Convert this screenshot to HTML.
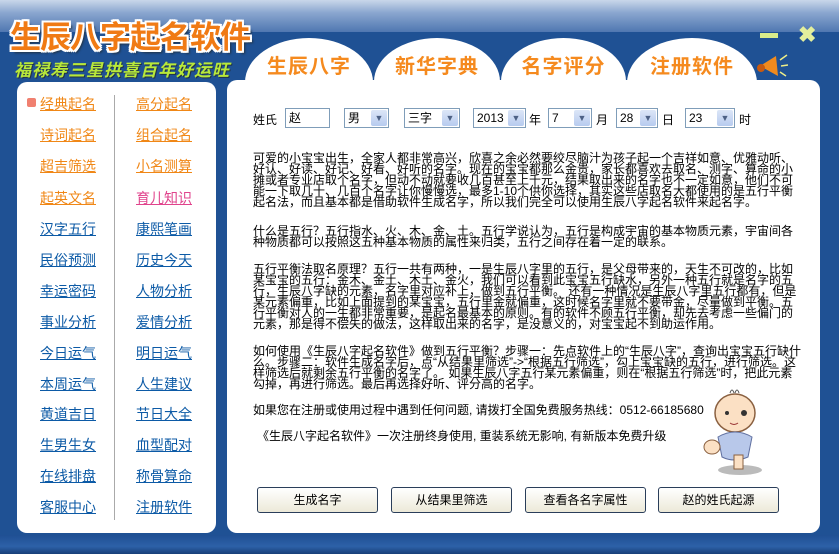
<!DOCTYPE html>
<html><head><meta charset="utf-8"><style>
*{margin:0;padding:0;box-sizing:border-box}
body{width:839px;height:554px;overflow:hidden;font-family:"Liberation Sans","WenQuanYi Zen Hei","Noto Sans CJK SC",sans-serif;font-size:12px;color:#000;position:relative;background:#1f5194}
.top{position:absolute;left:0;top:0;width:839px;height:32px;background:linear-gradient(180deg,#c9d7ea 0%,#8aa6cf 40%,#4f77b1 100%)}
.bot{position:absolute;left:0;top:535px;width:839px;height:19px;background:linear-gradient(180deg,#1f4f93,#2d61a8 60%,#173f78)}
.title{position:absolute;left:10px;top:12px;font-size:31px;font-weight:bold;color:#f07a14;letter-spacing:-1px;text-shadow:-2px 0 #fff,2px 0 #fff,0 -2px #fff,0 2px #fff,2px 2px #fff,-2px -2px #fff,2px -2px #fff,-2px 2px #fff,3px 3px 2px #234}
.sub{position:absolute;left:14px;top:56px;font-size:17px;font-weight:bold;color:#b8e83a;font-style:italic;letter-spacing:1px;text-shadow:1px 1px 0 #234}
.tab{position:absolute;top:38px;height:60px;background:#fff;border-radius:65px 65px 0 0 / 45px 45px 0 0;color:#f58a1e;font-size:20px;font-weight:bold;text-align:center;padding-top:12px;letter-spacing:1px}
.left{position:absolute;left:17px;top:82px;width:199px;height:451px;background:#fff;border-radius:10px}
.div{position:absolute;left:114px;top:95px;width:1px;height:425px;background:#aaa}
.m{position:absolute;font-size:14px;text-decoration:underline;color:#0c5aa6;white-space:nowrap}
.o{color:#f08716}.p{color:#e0438c}
.main{position:absolute;left:227px;top:80px;width:593px;height:453px;background:#fff;border-radius:10px}
.inp{position:absolute;top:108px;height:20px;border:1px solid #7f9db9;background:#fff;font-size:12px;padding:2px 3px;line-height:14px}
.sel .ar{position:absolute;right:1px;top:1px;width:16px;height:16px;background:linear-gradient(#dce6f7,#b7cbef);border-radius:2px;color:#4d6185;font-size:9px;text-align:center;line-height:16px}
.lbl{position:absolute;top:111px;font-size:12px}
.txt{position:absolute;left:253px;width:550px;font-size:12px;line-height:11px}
.btn{position:absolute;top:487px;width:121px;height:26px;border:1px solid #2a3e5a;border-radius:3px;background:linear-gradient(#fff,#ece9d8);text-align:center;line-height:24px;font-size:12px}
</style></head><body>
<div class="top"></div>
<div class="bot"></div>
<div class="title">生辰八字起名软件</div>
<div class="sub">福禄寿三星拱喜百年好运旺</div>
<div class="tab" style="left:245px;width:128px">生辰八字</div>
<div class="tab" style="left:374px;width:126px">新华字典</div>
<div class="tab" style="left:501px;width:125px">名字评分</div>
<div class="tab" style="left:627px;width:130px">注册软件</div>
<div style="position:absolute;left:760px;top:33px;width:18px;height:5px;background:#d9ec8a"></div>
<div style="position:absolute;left:798px;top:22px;font-size:22px;font-weight:bold;color:#e3ef9c">✖</div>
<svg style="position:absolute;left:756px;top:52px" width="32" height="28"><polygon points="4,14 20,4 22,24" fill="#f08a1e"/><circle cx="5" cy="16" r="4" fill="#c85a10"/><path d="M24 8 L31 3 M25 14 L32 13 M24 20 L30 24" stroke="#ee8" stroke-width="1.5"/></svg>
<div class="left"></div>
<div class="div"></div>
<div style="position:absolute;left:27px;top:98px;width:9px;height:9px;background:#f08070;border-radius:2px"></div>
<div class="m o" style="left:40px;top:94px">经典起名</div><div class="m o" style="left:136px;top:94px">高分起名</div>
<div class="m o" style="left:40px;top:125px">诗词起名</div><div class="m o" style="left:136px;top:125px">组合起名</div>
<div class="m o" style="left:40px;top:156px">超吉筛选</div><div class="m o" style="left:136px;top:156px">小名测算</div>
<div class="m o" style="left:40px;top:188px">起英文名</div><div class="m p" style="left:136px;top:188px">育儿知识</div>
<div class="m" style="left:40px;top:219px">汉字五行</div><div class="m" style="left:136px;top:219px">康熙笔画</div>
<div class="m" style="left:40px;top:250px">民俗预测</div><div class="m" style="left:136px;top:250px">历史今天</div>
<div class="m" style="left:40px;top:281px">幸运密码</div><div class="m" style="left:136px;top:281px">人物分析</div>
<div class="m" style="left:40px;top:312px">事业分析</div><div class="m" style="left:136px;top:312px">爱情分析</div>
<div class="m" style="left:40px;top:343px">今日运气</div><div class="m" style="left:136px;top:343px">明日运气</div>
<div class="m" style="left:40px;top:374px">本周运气</div><div class="m" style="left:136px;top:374px">人生建议</div>
<div class="m" style="left:40px;top:404px">黄道吉日</div><div class="m" style="left:136px;top:404px">节日大全</div>
<div class="m" style="left:40px;top:435px">生男生女</div><div class="m" style="left:136px;top:435px">血型配对</div>
<div class="m" style="left:40px;top:466px">在线排盘</div><div class="m" style="left:136px;top:466px">称骨算命</div>
<div class="m" style="left:40px;top:497px">客服中心</div><div class="m" style="left:136px;top:497px">注册软件</div>
<div class="main"></div>
<div class="lbl" style="left:253px">姓氏</div>
<div class="inp" style="left:285px;width:45px">赵</div>
<div class="inp sel" style="left:344px;width:45px">男<span class="ar">▼</span></div>
<div class="inp sel" style="left:404px;width:56px">三字<span class="ar">▼</span></div>
<div class="inp sel" style="left:473px;width:53px">2013<span class="ar">▼</span></div><div class="lbl" style="left:529px">年</div>
<div class="inp sel" style="left:548px;width:44px">7<span class="ar">▼</span></div><div class="lbl" style="left:596px">月</div>
<div class="inp sel" style="left:616px;width:42px">28<span class="ar">▼</span></div><div class="lbl" style="left:662px">日</div>
<div class="inp sel" style="left:685px;width:50px">23<span class="ar">▼</span></div><div class="lbl" style="left:739px">时</div>
<div class="txt" style="top:153px">可爱的小宝宝出生，全家人都非常高兴，欣喜之余必然要绞尽脑汁为孩子起一个吉祥如意、优雅动听、好认、好读、好记、好看、好听的名字。现在的宝宝都那么金贵，家长都喜欢去取名、测字、算命的小摊或者专业店取个名字，但动不动就要收几百甚至上千元，结果取出来的名字也不一定如意，他们不可能一下取几十、几百个名字让你慢慢选，最多1-10个供你选择，其实这些店取名大都使用的是五行平衡起名法，而且基本都是借助软件生成名字，所以我们完全可以使用生辰八字起名软件来起名字。</div>
<div class="txt" style="top:226px">什么是五行？五行指水、火、木、金、土。五行学说认为，五行是构成宇宙的基本物质元素，宇宙间各种物质都可以按照这五种基本物质的属性来归类，五行之间存在着一定的联系。</div>
<div class="txt" style="top:264px">五行平衡法取名原理？五行一共有两种，一是生辰八字里的五行，是父母带来的，天生不可改的，比如某宝宝的五行：金木、金土、木土、金火，我们可以看到此宝宝五行缺水，另外一种五行就是名字的五行，生辰八字缺的元素，名字里对应补上，做到五行平衡。 还有一种情况是生辰八字里五行都有，但是某元素偏重，比如上面提到的某宝宝，五行里金就偏重，这时候名字里就不要带金，尽量做到平衡。五行平衡对人的一生都非常重要，是起名最基本的原则。有的软件不顾五行平衡，却先去考虑一些偏门的元素，那是得不偿失的做法，这样取出来的名字，是没意义的，对宝宝起不到助运作用。</div>
<div class="txt" style="top:346px">如何使用《生辰八字起名软件》做到五行平衡？步骤一：先点软件上的“生辰八字”，查询出宝宝五行缺什么。步骤二：软件生成名字后，点“从结果里筛选”-&gt;“根据五行筛选”，勾上宝宝缺的五行，进行筛选。这样筛选后就剩余五行平衡的名字了。 如果生辰八字五行某元素偏重，则在“根据五行筛选”时，把此元素勾掉，再进行筛选。最后再选择好听、评分高的名字。</div>
<div class="txt" style="top:405px">如果您在注册或使用过程中遇到任何问题, 请拨打全国免费服务热线：0512-66185680</div>
<div class="txt" style="top:431px;left:257px">《生辰八字起名软件》一次注册终身使用, 重装系统无影响, 有新版本免费升级</div>
<svg style="position:absolute;left:700px;top:385px" width="70" height="92">
<ellipse cx="40" cy="85" rx="22" ry="5" fill="#bbb"/>
<ellipse cx="35" cy="28" rx="20" ry="19" fill="#fbe0c4" stroke="#8a6040" stroke-width="1.5"/>
<path d="M30 8 q2 -6 4 0 M35 8 q2 -6 4 0" stroke="#555" fill="none"/>
<path d="M18 52 q17 -10 34 0 l-4 20 q-14 6 -26 0z" fill="#b8c8ea" stroke="#6070a0"/>
<rect x="34" y="70" width="9" height="14" fill="#fbe0c4" stroke="#8a6040"/>
<ellipse cx="12" cy="62" rx="8" ry="7" fill="#fbe0c4" stroke="#8a6040"/>
<circle cx="27" cy="28" r="2" fill="#333"/><circle cx="44" cy="28" r="3" fill="#333"/>
<path d="M30 38 q4 3 8 0" stroke="#933" fill="none"/></svg>
<div class="btn" style="left:257px">生成名字</div>
<div class="btn" style="left:391px">从结果里筛选</div>
<div class="btn" style="left:525px">查看各名字属性</div>
<div class="btn" style="left:658px">赵的姓氏起源</div>
</body></html>
